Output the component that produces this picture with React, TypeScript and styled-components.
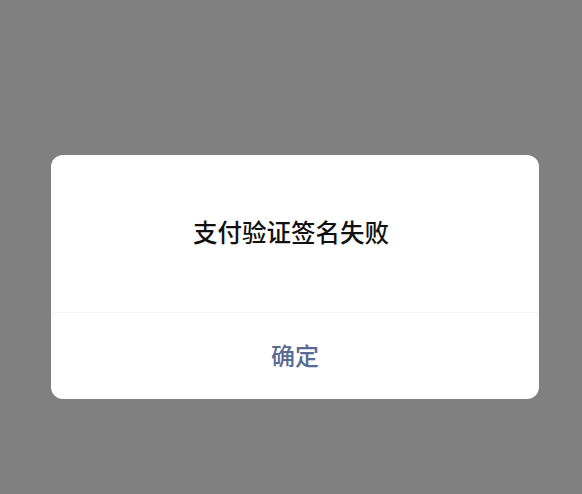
import React, { FC } from 'react';
import styled, { createGlobalStyle } from 'styled-components';

const GlobalStyle = createGlobalStyle`
    html, body {
        margin: 0;
        padding: 0;
        height: 100%;
    }
    body {
        font-family: "Noto Sans CJK SC", "Noto Sans", sans-serif;
    }
    #root {
        height: 100%;
    }
`;

const App: FC = () => {
    return (
        <>
            <GlobalStyle />
            <StyledMask>
                <StyledDialog>
                    <StyledBody>支付验证签名失败</StyledBody>
                    <StyledFooter>
                        <StyledButton type="button">确定</StyledButton>
                    </StyledFooter>
                </StyledDialog>
            </StyledMask>
        </>
    );
};

const StyledMask = styled.div`
    background-color: #808080;
    width: 100vw;
    height: 100vh;
    display: flex;
    justify-content: center;
    align-items: flex-start;
    padding: 155px 0 0 8px;
    box-sizing: border-box;
`;

const StyledDialog = styled.div`
    width: 488px;
    background-color: #ffffff;
    border-radius: 12px;
    overflow: hidden;
    display: flex;
    flex-direction: column;
`;

const StyledBody = styled.div`
    height: 158px;
    display: flex;
    align-items: center;
    justify-content: center;
    font-size: 24.5px;
    font-weight: 500;
    color: #111111;
    border-bottom: 1px solid #f7f7f7;
    box-sizing: border-box;
    padding: 0 8px 5px 0;
`;

const StyledFooter = styled.div`
    height: 86px;
    display: flex;
`;

const StyledButton = styled.button`
    flex: 1;
    border: none;
    background: none;
    font-family: inherit;
    font-size: 24px;
    font-weight: 500;
    color: #576b95;
    padding: 0 0 4px;
    cursor: pointer;
`;

export default App;
